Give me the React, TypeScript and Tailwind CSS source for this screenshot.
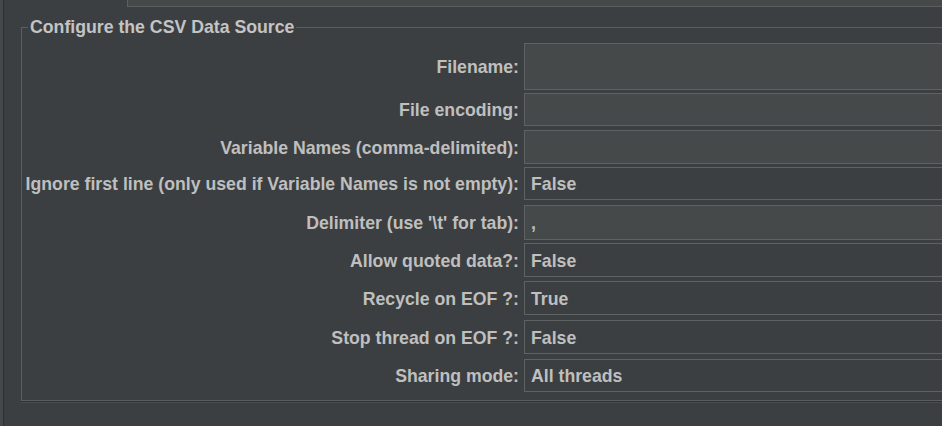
import React from "react";

type Row = {
  label: string;
  value?: string;
  kind: "text" | "combo";
  cls: string;
};

const rows: Row[] = [
  { label: "Filename:", kind: "text", cls: "h-[47px]" },
  { label: "File encoding:", kind: "text", cls: "mt-[3px] h-[33px]" },
  { label: "Variable Names (comma-delimited):", kind: "text", cls: "mt-[4px] h-[34px]" },
  {
    label: "Ignore first line (only used if Variable Names is not empty):",
    value: "False",
    kind: "combo",
    cls: "mt-[3px] h-[33px]",
  },
  { label: "Delimiter (use '\\t' for tab):", value: ",", kind: "text", cls: "mt-[5px] h-[35px]" },
  { label: "Allow quoted data?:", value: "False", kind: "combo", cls: "mt-[3px] h-[34px]" },
  { label: "Recycle on EOF ?:", value: "True", kind: "combo", cls: "mt-[4px] h-[34px]" },
  { label: "Stop thread on EOF ?:", value: "False", kind: "combo", cls: "mt-[5px] h-[34px]" },
  { label: "Sharing mode:", value: "All threads", kind: "combo", cls: "mt-[5px] h-[33px]" },
];

export default function App() {
  return (
    <div
      className="w-[942px] h-[426px] overflow-hidden bg-[#3c3f41] flex text-[#bfbfbf] font-bold text-[17.7px]"
      style={{ fontFamily: '"Liberation Sans", Arial, sans-serif' }}
    >
      <div className="w-[3px] h-full bg-[#45484a] border-r border-[#2d2f30] shrink-0 box-content" />
      <div className="flex flex-col flex-1 min-w-0">
        <div className="ml-[123px] h-[7px] bg-[#45494a] border-l border-b border-[#5b5f60]" />
        <fieldset className="ml-[17px] mt-[10px] w-[980px] border border-[#5b5f60] pb-[8px] shadow-[0_1px_0_#2f3233,0_2px_0_#4a4d4f]">
          <legend className="ml-[6px] px-[2px] leading-[20px] text-[#c4c4c4]">Configure the CSV Data Source</legend>
          <div className="flex flex-col pt-[6px]">
            {rows.map((r) => (
              <div key={r.label} className={"flex items-stretch " + r.cls}>
                <div className="w-[502px] shrink-0 flex items-center justify-end pr-[5px] pt-[2px] whitespace-nowrap">
                  {r.label}
                </div>
                <div
                  className={
                    "flex-1 flex items-center pl-[6px] pt-[2px] border border-[#5e6263] " +
                    (r.kind === "text" ? "bg-[#45494a]" : "bg-[#3c3f41]")
                  }
                >
                  {r.value ?? ""}
                </div>
              </div>
            ))}
          </div>
        </fieldset>
      </div>
    </div>
  );
}
